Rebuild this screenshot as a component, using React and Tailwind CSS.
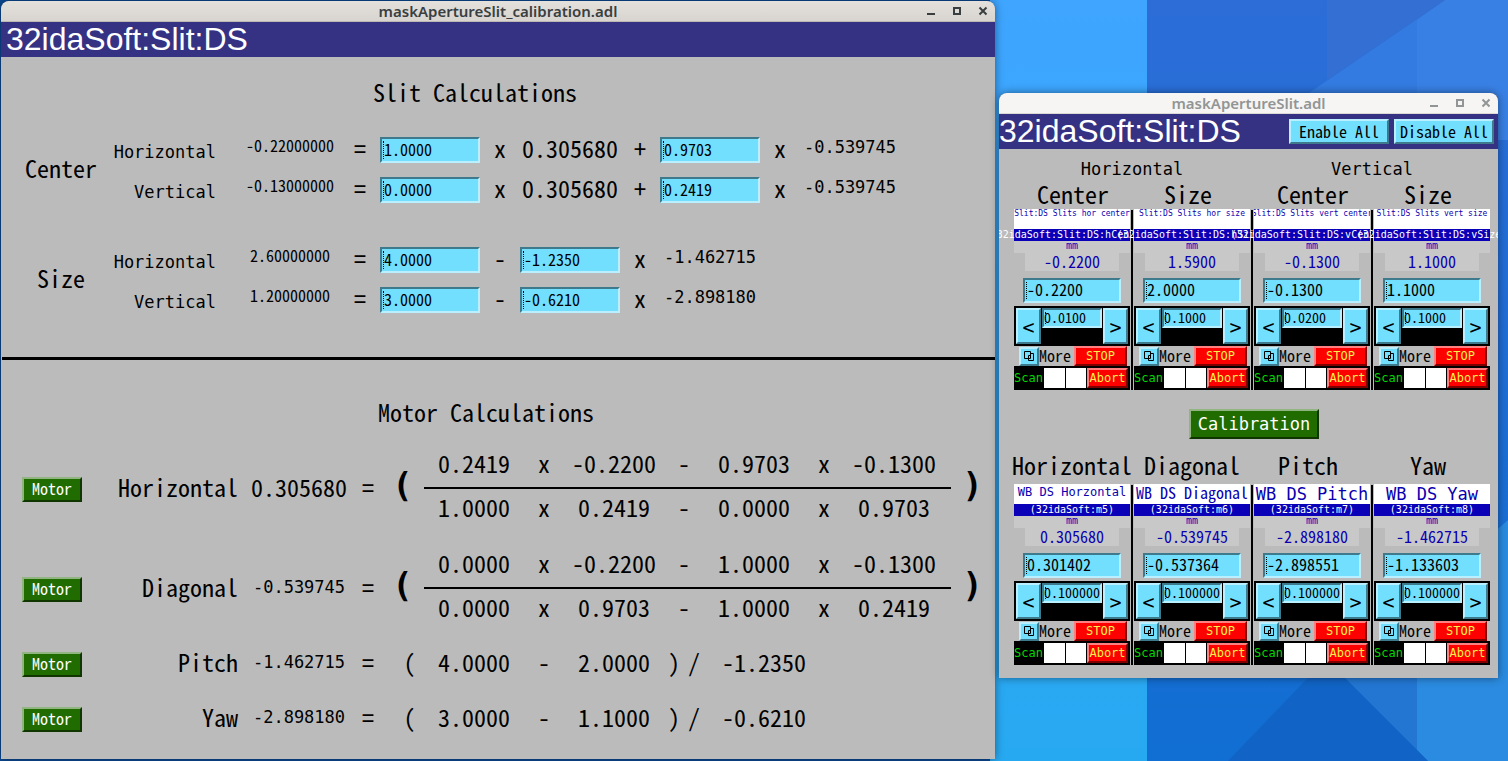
import React from "react";

const MONO = "font-['Noto_Sans_Mono_CJK_JP','Liberation_Mono',monospace]";
const WIDE = "font-['DejaVu_Sans_Mono','Liberation_Mono',monospace]";
const T24 = `${MONO} text-[24px] leading-[30px]`;
const T16 = `${MONO} text-[16px] leading-[18px]`;
const T17 = `${WIDE} text-[17px] leading-[20px]`;
const RAISED_CYAN =
  "border-2 border-t-[#b9efff] border-l-[#b9efff] border-b-[#3e7a8c] border-r-[#3e7a8c] bg-[#73dfff]";
const SUNK_CYAN =
  "border-2 border-t-[#3e7a8c] border-l-[#3e7a8c] border-b-[#b9efff] border-r-[#b9efff] bg-[#73dfff]";
const RAISED_GREEN =
  "border-2 border-t-[#90b580] border-l-[#90b580] border-b-[#103600] border-r-[#103600] bg-[#216c00] text-white";
const RAISED_RED =
  "border-2 border-t-[#ff8080] border-l-[#ff8080] border-b-[#800000] border-r-[#800000] bg-[#fd0000] text-[#fbf34a]";

function Wallpaper() {
  return (
    <svg
      className="absolute inset-0 h-full w-full"
      viewBox="0 0 1508 761"
      preserveAspectRatio="none"
      aria-hidden="true"
    >
      <defs>
        <linearGradient id="light" x1="0" y1="0" x2="0" y2="1">
          <stop offset="0" stopColor="#3fa5ff" />
          <stop offset="1" stopColor="#27a9f1" />
        </linearGradient>
        <linearGradient id="deep" x1="0" y1="0" x2="0" y2="1">
          <stop offset="0" stopColor="#2c6dd8" />
          <stop offset="1" stopColor="#116ed2" />
        </linearGradient>
      </defs>
      <rect width="1508" height="761" fill="#0c4a94" />
      <rect x="990" width="157" height="761" fill="url(#light)" />
      <rect x="1147" width="361" height="761" fill="url(#deep)" />
      <polygon points="1445,0 1508,0 1508,140 1240,140" fill="#337be0" />
      <polygon points="1445,0 1508,0 1508,140 1417,140 1417,20" fill="#3880e4" />
      <polygon points="1327,0 1445,0 1327,80" fill="#3470d3" />
      <polygon points="1343,676 1470,550 1508,550 1508,761 1428,761" fill="#2377d3" />
      <polygon points="1417,600 1508,520 1508,761 1428,761 1417,750" fill="#2b8be0" />
      <polygon points="1326,659 1228,761 1428,761" fill="#1164c5" />
    </svg>
  );
}

function TitleBar({ title, active }) {
  const tone = active
    ? "bg-linear-to-b from-[#e4e0dc] to-[#d8d4cf] text-[#393f41] border-[#bdb8b2]"
    : "bg-[#f6f5f3] text-[#929595] border-[#dcd8d3]";
  return (
    <div className={`grid h-[21px] grid-cols-[1fr_auto_1fr] items-center rounded-t-lg border-b ${tone}`}>
      <span />
      <h1 className="font-['Noto_Sans','Open_Sans',sans-serif] text-[15px] font-semibold leading-[20px]">{title}</h1>
      <div className="flex justify-end gap-[14px] pr-1.5">
        <button type="button" aria-label="Minimize" className="size-3">
          <svg viewBox="0 0 12 12" className="size-3" fill="currentColor"><rect x="2" y="8" width="8" height="2" /></svg>
        </button>
        <button type="button" aria-label="Maximize" className="size-3">
          <svg viewBox="0 0 12 12" className="size-3" fill="none" stroke="currentColor" strokeWidth="2"><rect x="3" y="3" width="6" height="6" /></svg>
        </button>
        <button type="button" aria-label="Close" className="size-3">
          <svg viewBox="0 0 12 12" className="size-3" fill="none" stroke="currentColor" strokeWidth="2"><path d="M2.5 2.5 L9.5 9.5 M9.5 2.5 L2.5 9.5" /></svg>
        </button>
      </div>
    </div>
  );
}

function Field({ label, value, size, text, pad }) {
  return (
    <label className={`relative block ${size}`}>
      <input
        type="text"
        aria-label={label}
        defaultValue={value}
        className={`block h-full w-full min-w-0 rounded-none outline-none ${SUNK_CYAN} ${text} ${pad}`}
      />
      <span className="pointer-events-none absolute top-1 bottom-1 left-[3px] border-l border-dotted border-black" />
    </label>
  );
}

function Op({ children }) {
  return <span className={`pb-1 text-center ${T24}`}>{children}</span>;
}

function Readback({ children }) {
  return <span className={`pb-1.5 text-center ${T17}`}>{children}</span>;
}

const SLIT_GRID =
  "grid h-10 grid-cols-[127px_100px_40px_100px_40px_100px_40px_100px_40px_100px] items-center";

function SlitRow({ label, value, children }) {
  return (
    <div className={SLIT_GRID}>
      <span className={`pt-1 pr-6 text-right whitespace-nowrap ${T17}`}>{label}</span>
      <span className={`pb-2.5 text-center ${T16}`}>{value}</span>
      <Op>=</Op>
      {children}
    </div>
  );
}

function CoefField({ label, value }) {
  return <Field label={label} value={value} size="h-[26px] w-full" text={T16} pad="px-0.5 pb-[3px]" />;
}

const CENTER_ROWS = [
  { label: "Horizontal", value: "-0.22000000", a: "1.0000", b: "0.9703" },
  { label: "Vertical", value: "-0.13000000", a: "0.0000", b: "0.2419" },
];
const SIZE_ROWS = [
  { label: "Horizontal", value: "2.60000000", a: "4.0000", b: "-1.2350", m: "-1.462715" },
  { label: "Vertical", value: "1.20000000", a: "3.0000", b: "-0.6210", m: "-2.898180" },
];

function SlitGroup({ name, className, children }) {
  return (
    <div className={`flex items-center ${className}`}>
      <h3 className={`w-[112px] pb-1 pl-2 text-center ${T24}`}>{name}</h3>
      <div>{children}</div>
    </div>
  );
}

function MotorRow({ name, value, small, height, children }) {
  return (
    <div className={`flex ${height} items-center pl-[21px]`}>
      <button type="button" className={`h-[25px] w-[60px] pb-0.5 ${RAISED_GREEN} ${T16}`}>Motor</button>
      <span className={`w-[156px] pb-1 text-right ${T24}`}>{name}</span>
      <span className={`ml-[11px] w-[100px] text-center ${small ? `pb-1 ${T17}` : `pb-1 ${T24}`}`}>{value}</span>
      <span className={`w-[38px] pb-1 text-center ${T24}`}>=</span>
      {children}
    </div>
  );
}

const TERM_GRID = "grid grid-cols-[100px_40px_100px_40px_100px_40px_100px] items-center";

function Terms({ terms, className }) {
  return (
    <div className={`${TERM_GRID} ${className}`}>
      {terms.map((t, i) => <Op key={i}>{t}</Op>)}
    </div>
  );
}

function Fraction({ top, bottom }) {
  const paren = "font-['DejaVu_Sans_Mono',monospace] text-[34px] font-bold leading-[40px] pb-2 text-center";
  return (
    <>
      <span className={`w-[37px] pr-1.5 ${paren}`}>(</span>
      <div className="w-[527px]">
        <Terms terms={top} className="h-12 pt-[3px]" />
        <div className="h-0.5 bg-black" />
        <Terms terms={bottom} className="h-[50px] pb-2.5" />
      </div>
      <span className={`w-[43px] ${paren}`}>)</span>
    </>
  );
}

function Ratio({ a, b, d }) {
  return (
    <>
      <span className={`w-[37px] pb-1 pl-2 text-center ${T24}`}>(</span>
      <div className="grid grid-cols-[100px_40px_100px_40px_120px] items-center">
        <Op>{a}</Op>
        <Op>-</Op>
        <Op>{b}</Op>
        <span className={`flex justify-around pb-1 ${T24}`}><span>)</span><span>/</span></span>
        <Op>{d}</Op>
      </div>
    </>
  );
}

function CalibrationWindow() {
  return (
    <main className="min-w-0 flex-1 overflow-hidden rounded-t-lg bg-[#bbbbbb] text-black shadow-[0_0_8px_rgba(0,0,0,0.45)]">
      <TitleBar title="maskApertureSlit_calibration.adl" active />
      <header className="flex h-[35px] items-center bg-[#353284] pl-[5px] font-['Liberation_Sans',Arial,sans-serif] text-[32px] leading-[35px] text-white">
        32idaSoft:Slit:DS
      </header>

      <section className="pt-5">
        <h2 className={`w-[948px] text-center ${T24}`}>Slit Calculations</h2>
        <SlitGroup name="Center" className="mt-[23px]">
          {CENTER_ROWS.map((r) => (
            <SlitRow key={r.label} label={r.label} value={r.value}>
              <CoefField label={`Center ${r.label} first coefficient`} value={r.a} />
              <Op>x</Op>
              <Op>0.305680</Op>
              <Op>+</Op>
              <CoefField label={`Center ${r.label} second coefficient`} value={r.b} />
              <Op>x</Op>
              <Readback>-0.539745</Readback>
            </SlitRow>
          ))}
        </SlitGroup>
        <SlitGroup name="Size" className="mt-[30px]">
          {SIZE_ROWS.map((r) => (
            <SlitRow key={r.label} label={r.label} value={r.value}>
              <CoefField label={`Size ${r.label} offset`} value={r.a} />
              <Op>-</Op>
              <CoefField label={`Size ${r.label} coefficient`} value={r.b} />
              <Op>x</Op>
              <Readback>{r.m}</Readback>
            </SlitRow>
          ))}
        </SlitGroup>
      </section>

      <hr className="mt-[37px] ml-px border-0 border-t-[3px] border-black" />

      <section className="pt-[37px] pb-[15px]">
        <h2 className={`mb-3 w-[970px] text-center ${T24}`}>Motor Calculations</h2>
        <MotorRow name="Horizontal" value="0.305680" height="h-[100px]">
          <Fraction
            top={["0.2419", "x", "-0.2200", "-", "0.9703", "x", "-0.1300"]}
            bottom={["1.0000", "x", "0.2419", "-", "0.0000", "x", "0.9703"]}
          />
        </MotorRow>
        <MotorRow name="Diagonal" value="-0.539745" small height="h-[100px]">
          <Fraction
            top={["0.0000", "x", "-0.2200", "-", "1.0000", "x", "-0.1300"]}
            bottom={["0.0000", "x", "0.9703", "-", "1.0000", "x", "0.2419"]}
          />
        </MotorRow>
        <div className="flex flex-col gap-[5px]">
          <MotorRow name="Pitch" value="-1.462715" small height="h-[50px]">
            <Ratio a="4.0000" b="2.0000" d="-1.2350" />
          </MotorRow>
          <MotorRow name="Yaw" value="-2.898180" small height="h-[50px]">
            <Ratio a="3.0000" b="1.1000" d="-0.6210" />
          </MotorRow>
        </div>
      </section>
    </main>
  );
}

const D8 = `${WIDE} text-[8px] leading-[10px]`;
const D12 = `${WIDE} text-[12px] leading-[16px]`;
const D14 = `${MONO} text-[14px] leading-[15px]`;
const SLITS = [
  { id: "hc", title: "Slit:DS Slits hor center", font: D8, channel: "(32idaSoft:Slit:DS:hCenter)", value: "-0.2200", set: "-0.2200", step: "0.0100" },
  { id: "hs", title: "Slit:DS Slits hor size", font: D8, channel: "(32idaSoft:Slit:DS:hSize)", value: "1.5900", set: "2.0000", step: "0.1000" },
  { id: "vc", title: "Slit:DS Slits vert center", font: D8, channel: "(32idaSoft:Slit:DS:vCenter)", value: "-0.1300", set: "-0.1300", step: "0.0200" },
  { id: "vs", title: "Slit:DS Slits vert size", font: D8, channel: "(32idaSoft:Slit:DS:vSize)", value: "1.1000", set: "1.1000", step: "0.1000" },
];
const MOTORS = [
  { id: "m5", title: "WB DS Horzontal", font: D12, channel: "(32idaSoft:m5)", value: "0.305680", set: "0.301402", step: "0.100000" },
  { id: "m6", title: "WB DS Diagonal", font: `${MONO} text-[16px] leading-[16px]`, channel: "(32idaSoft:m6)", value: "-0.539745", set: "-0.537364", step: "0.100000" },
  { id: "m7", title: "WB DS Pitch", font: T17, channel: "(32idaSoft:m7)", value: "-2.898180", set: "-2.898551", step: "0.100000" },
  { id: "m8", title: "WB DS Yaw", font: T17, channel: "(32idaSoft:m8)", value: "-1.462715", set: "-1.133603", step: "0.100000" },
];

function MotorPanel({ m }) {
  const arrow = `h-9 w-[25px] shrink-0 ${RAISED_CYAN} ${WIDE} text-[20px] leading-[32px] flex items-center justify-center pt-0.5`;
  return (
    <article className="min-w-0 flex-1">
      <div className="flex h-5 justify-center overflow-hidden bg-white text-[#0a00b0]">
        <span className={`whitespace-nowrap ${m.font}`}>{m.title}</span>
      </div>
      <div className={`flex h-3 justify-center whitespace-nowrap bg-[#0a00b8] text-[10px] leading-[12px] text-white ${WIDE}`}>
        <span>{m.channel}</span>
      </div>
      <div className={`h-3 bg-[#c8c8c8] text-center text-[10px] leading-[10px] text-[#0a00b0] ${WIDE}`}>mm</div>
      <div className={`mx-[11px] h-[18px] bg-[#c8c8c8] text-center text-[#0a00b0] ${MONO} text-[16px] leading-[16px]`}>{m.value}</div>
      <div className="mx-[9px] mt-[7px] mb-[3px]">
        <Field label={`${m.title} set point`} value={m.set} size="h-[25px]" text={T16} pad="px-0.5 pb-[3px]" />
      </div>
      <div className="flex h-10 gap-px bg-black p-0.5">
        <button type="button" aria-label="Step down" className={arrow}>&lt;</button>
        <Field label={`${m.title} step`} value={m.step} size="h-5 min-w-0 flex-1" text={D14} pad="px-0 pb-[3px]" />
        <button type="button" aria-label="Step up" className={arrow}>&gt;</button>
      </div>
      <div className="flex h-5 items-center pr-[3px] pl-[5px]">
        <button type="button" aria-label="More options" className={`flex h-[19px] w-5 items-center justify-center ${RAISED_CYAN}`}>
          <svg viewBox="0 0 14 14" className="size-3.5" fill="none" stroke="black" strokeWidth="1">
            <path d="M2.5 2.5 H8.5 V9.5 H2.5 Z M9 4.5 H11.5 V11.5 H6.5 V9.5 M6.5 9 V6.5 H8" />
          </svg>
        </button>
        <span className={`pb-0.5 ${T16}`}>More</span>
        <button type="button" className={`ml-auto h-5 w-[53px] ${RAISED_RED} ${D12}`}>STOP</button>
      </div>
      <div className="flex h-6 items-center gap-px bg-black pr-0.5">
        <span className={`w-[29px] text-center text-[#00d800] ${D12}`}>Scan</span>
        <button type="button" aria-label="Scan slower" className="h-5 min-w-0 flex-1 bg-white" />
        <button type="button" aria-label="Scan faster" className="h-5 min-w-0 flex-1 bg-white" />
        <button type="button" className={`h-5 w-[41px] ${RAISED_RED} ${D12}`}>Abort</button>
      </div>
    </article>
  );
}

function PanelRow({ items }) {
  return (
    <div className="flex">
      {items.map((m, i) => (
        <React.Fragment key={m.id}>
          {i > 0 && <div className="mx-px mt-px w-0.5 shrink-0 bg-black" />}
          <MotorPanel m={m} />
        </React.Fragment>
      ))}
    </div>
  );
}

function PanelHeads({ names, columns }) {
  return (
    <div className={`grid ${columns} ${T24}`}>
      {names.map((n, i) => (
        <h3 key={i} className="flex h-[26px] items-center justify-center pb-1">{n}</h3>
      ))}
    </div>
  );
}

function SlitWindow() {
  const top = `h-[25px] w-[100px] whitespace-nowrap pb-0.5 ${RAISED_CYAN} ${T16}`;
  return (
    <aside className="mt-[92px] w-[499px] shrink-0 overflow-hidden rounded-t-lg bg-[#bbbbbb] text-black shadow-[0_0_8px_rgba(0,0,0,0.45)]">
      <TitleBar title="maskApertureSlit.adl" />
      <header className="flex h-[35px] items-center bg-[#353284] pr-1">
        <span className="font-['Liberation_Sans',Arial,sans-serif] text-[32px] leading-[35px] text-white">32idaSoft:Slit:DS</span>
        <div className="ml-auto flex gap-[5px]">
          <button type="button" className={top}>Enable All</button>
          <button type="button" className={top}>Disable All</button>
        </div>
      </header>
      <div className="pt-[10px] pr-2 pb-[13px] pl-[15px]">
        <div className={`mb-1 grid grid-cols-2 gap-x-1 text-center ${T17}`}>
          <h2>Horizontal</h2>
          <h2>Vertical</h2>
        </div>
        <PanelHeads names={["Center", "Size", "Center", "Size"]} columns="grid-cols-[118px_112px_138px_92px]" />
        <PanelRow items={SLITS} />
        <div className="flex justify-center pt-[19px] pb-[15px] pl-1">
          <button type="button" className={`h-[30px] w-[130px] ${RAISED_GREEN} ${T17}`}>Calibration</button>
        </div>
        <div className="pb-1">
          <PanelHeads names={["Horizontal", "Diagonal", "Pitch", "Yaw"]} columns="grid-cols-[116px_124px_108px_132px]" />
        </div>
        <PanelRow items={MOTORS} />
      </div>
    </aside>
  );
}

export default function App() {
  return (
    <div className="relative min-h-screen overflow-hidden bg-[#0c4a94]">
      <Wallpaper />
      <div className="relative flex items-start gap-1 pt-px pr-2.5 pb-0.5 pl-px">
        <CalibrationWindow />
        <SlitWindow />
      </div>
    </div>
  );
}
